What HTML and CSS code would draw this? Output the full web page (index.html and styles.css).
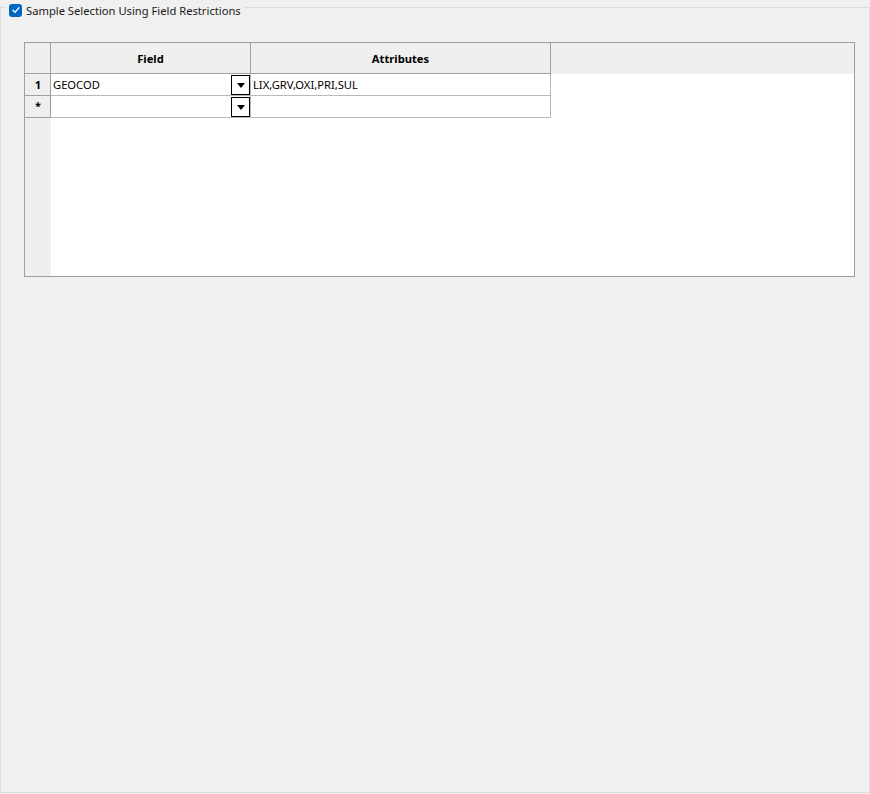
FILE: index.html
```html
<!DOCTYPE html>
<html>
<head>
<meta charset="utf-8">
<link rel="stylesheet" href="styles.css">
</head>
<body>
<div class="group">
  <div class="legend">
    <span class="check">
      <svg width="12" height="12" viewBox="0 0 12 12"><path d="M3 6.2 L5 8.2 L9 3.8" fill="none" stroke="#fff" stroke-width="1.3" stroke-linecap="round" stroke-linejoin="round"/></svg>
    </span>
    <span class="legend-text">Sample Selection Using Field Restrictions</span>
  </div>
  <div class="grid">
    <div class="hcell corner"></div>
    <div class="hcell col">Field</div>
    <div class="hcell col">Attributes</div>
    <div class="hfill"></div>

    <div class="rowhead">1</div>
    <div class="cell field"><span>GEOCOD</span><span class="dd"><span class="tri"></span></span></div>
    <div class="cell">LIX,GRV,OXI,PRI,SUL</div>
    <div class="fill"></div>

    <div class="rowhead star">*</div>
    <div class="cell field"><span></span><span class="dd"><span class="tri"></span></span></div>
    <div class="cell"></div>
    <div class="fill"></div>

    <div class="rowfill"></div>
    <div class="fill"></div>
    <div class="fill"></div>
    <div class="fill"></div>
  </div>
</div>
</body>
</html>
```

FILE: styles.css
```css
html, body {
  margin: 0;
  padding: 0;
  background: #f0f0f0;
}
body {
  width: 870px;
  height: 794px;
  font-family: "Segoe UI", "Noto Sans", "Open Sans", sans-serif;
  font-size: 11.2px;
  color: #000;
  padding-top: 7px;
  box-sizing: border-box;
}
.group {
  position: relative;
  width: 870px;
  height: 786px;
  box-sizing: border-box;
  border: 1px solid #dcdcdc;
  padding: 34px 0 0 23px;
}
.legend {
  position: absolute;
  left: 5px;
  top: -6px;
  display: flex;
  align-items: center;
  gap: 4px;
  padding: 0 4px 0 3px;
  height: 18px;
  background: #f0f0f0;
}
.check {
  width: 13px;
  height: 13px;
  border-radius: 3px;
  background: #0067c0;
  display: flex;
  align-items: center;
  justify-content: center;
  margin-top: -2px;
}
.check svg { display: block; }
.legend-text {
  color: #1a1a1a;
  font-size: 11.2px;
  line-height: 16px;
}
.grid {
  width: 831px;
  height: 235px;
  box-sizing: border-box;
  border: 1px solid #a0a0a0;
  display: grid;
  grid-template-columns: 26px 200px 300px 1fr;
  grid-template-rows: 31px 22px 22px 1fr;
  background: #fff;
}
.hcell {
  background: #efefef;
  border-right: 1px solid #a0a0a0;
  border-bottom: 1px solid #a0a0a0;
  font-weight: bold;
  display: flex;
  align-items: center;
  justify-content: center;
}
.hfill {
  background: #efefef;
}
.rowhead {
  background: #efefef;
  border-right: 1px solid #a0a0a0;
  border-bottom: 1px solid #a0a0a0;
  font-weight: bold;
  display: flex;
  align-items: center;
  justify-content: center;
  padding-left: 1px;
}
.rowhead.star {
  font-size: 11px;
  padding-bottom: 2px;
}
.rowfill {
  background: #efefef;
}
.cell {
  background: #fff;
  border-right: 1px solid #b9b9b9;
  border-bottom: 1px solid #b9b9b9;
  display: flex;
  align-items: center;
  padding-left: 2px;
  white-space: nowrap;
}
.cell.field {
  justify-content: space-between;
  padding-right: 0;
}
.dd {
  width: 17px;
  height: 18px;
  border: 1px solid #000;
  background: #fff;
  display: flex;
  align-items: center;
  justify-content: center;
}
.tri {
  width: 0;
  height: 0;
  border-left: 4.5px solid transparent;
  border-right: 4.5px solid transparent;
  border-top: 5px solid #000;
  margin-top: 1px;
}
.fill {
  background: #fff;
}
```
